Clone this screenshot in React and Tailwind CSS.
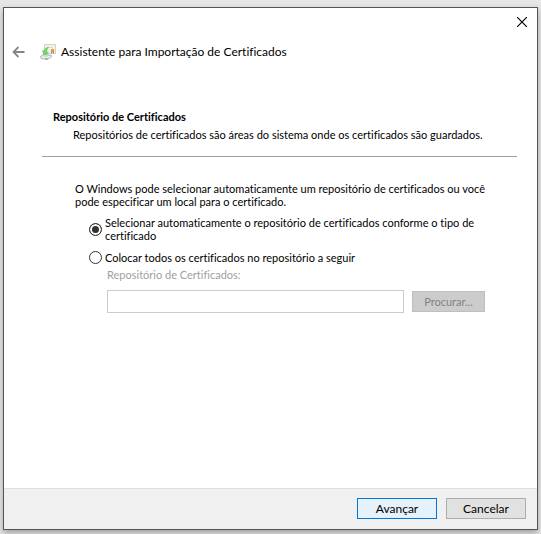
import { useState } from 'react'

function BackIcon() {
  return (
    <svg width="14" height="12" viewBox="0 0 14 12" fill="none" stroke="#868686" strokeWidth="1.8">
      <path d="M6.5 1 L1.5 6 L6.5 11 M1.5 6 H12.5" />
    </svg>
  )
}

function CloseIcon() {
  return (
    <svg width="10" height="10" viewBox="0 0 10 10" stroke="#000" strokeWidth="1.2">
      <path d="M0 0 L10 10 M10 0 L0 10" />
    </svg>
  )
}

function CertificateIcon() {
  return (
    <svg width="16" height="16" viewBox="0 0 16 16">
      {/* Paper */}
      <path d="M4.5 0.5 H15.5 V9.5 H4.5 Z" fill="#f5f2ec" stroke="#d6cfc2" />
      <path d="M7 3.5 H13" stroke="#e2dcd0" />
      {/* Seal and ribbon */}
      <path d="M11.8 7 L11.5 9.5 M13.2 7 L13.5 9.5" stroke="#5a8fc4" />
      <circle cx="12.5" cy="6.5" r="1.7" fill="#e39a1c" />
      {/* Drive */}
      <path d="M0.5 12.5 L4 10 L11.5 11.5 L11.5 13 L7 15.5 L1 14.3 Z" fill="#dcdedc" stroke="#9a9e9a" strokeWidth="0.7" />
      <path d="M1.5 13 L6.8 14 L11 12.3" stroke="#f6f6f6" fill="none" />
      <path d="M5.5 14.6 L7.5 15" stroke="#49b050" strokeWidth="1.1" />
      {/* Arrow */}
      <path d="M8.6 3.2 C6 3.6 4.6 5 4.3 7 L2.4 6.8 L4.2 11.2 L8.4 8.4 L6.6 7.8 C6.7 5.8 7.4 4.4 8.6 3.2 Z" fill="#6bdc66" stroke="#4cb850" strokeWidth="0.5" />
    </svg>
  )
}

const radioClass =
  "appearance-none flex-shrink-0 w-[13px] h-[13px] rounded-full border border-[#333] bg-white checked:bg-[#333] checked:shadow-[inset_0_0_0_2px_#fff]"

export default function App() {
  const [store, setStore] = useState('auto')
  const manual = store === 'manual'

  return (
    <div className="min-h-screen flex flex-col bg-[#e6e6e6] pt-[7px] px-[3px] pb-1 text-black text-[11px] leading-[13px] font-[Lato,sans-serif] [font-variant-ligatures:none]">
      <main className="flex-1 flex flex-col bg-white border border-[#555] shadow-[0_3px_6px_rgba(0,0,0,0.3)]">
        <div className="flex justify-end">
          <button type="button" aria-label="Fechar" className="w-[30px] h-7 flex items-center justify-center">
            <CloseIcon />
          </button>
        </div>

        <header className="flex items-center h-8 pl-2">
          <button type="button" aria-label="Voltar" className="w-7 flex">
            <BackIcon />
          </button>
          <CertificateIcon />
          <h1 className="pl-[5px] text-[12px] leading-4">
            Assistente para Importação de Certificados
          </h1>
        </header>

        <section className="mt-[42px] ml-[38px] mr-5 pl-[11px] pb-[15px] border-b border-[#a0a0a0]">
          <h2 className="font-bold">Repositório de Certificados</h2>
          <p className="pt-[5px] pl-5">
            Repositórios de certificados são áreas do sistema onde os certificados são guardados.
          </p>
        </section>

        <section className="flex-1 pt-[25px] pl-[71px] pr-5 pb-6">
          <p>
            O Windows pode selecionar automaticamente um repositório de certificados ou você
            <br />
            pode especificar um local para o certificado.
          </p>

          <div className="pt-2 pl-[14px]">
            <label className="flex items-center gap-[3px]">
              <input type="radio" name="store" className={radioClass} checked={!manual} onChange={() => setStore('auto')} />
              <span>
                Selecionar automaticamente o repositório de certificados conforme o tipo de
                <br />
                certificado
              </span>
            </label>
            <label className="flex items-center gap-[3px] pt-[9px]">
              <input type="radio" name="store" className={radioClass} checked={manual} onChange={() => setStore('manual')} />
              <span>Colocar todos os certificados no repositório a seguir</span>
            </label>
          </div>

          <div className="pt-1 pl-8 pr-8">
            <label htmlFor="store-name" className="block text-[#a0a0a0]">
              Repositório de Certificados:
            </label>
            <div className="flex items-center gap-2 pt-[9px]">
              <input
                id="store-name"
                type="text"
                disabled={!manual}
                className="flex-1 min-w-0 h-[23px] px-1 border border-[#ccc] bg-white"
              />
              <button
                type="button"
                disabled={!manual}
                className="w-[73px] h-[21px] border border-[#bfbfbf] bg-[#ccc] text-[#838383]"
              >
                Procurar...
              </button>
            </div>
          </div>
        </section>

        <footer className="flex justify-end gap-[9px] pt-[9px] pb-[10px] pr-[11px] border-t border-[#dfdfdf] bg-[#f0f0f0] text-[12px]">
          <button type="button" className="w-20 h-[21px] border border-[#0078d7] bg-[#e5f1fb]">
            Avançar
          </button>
          <button type="button" className="w-20 h-[21px] border border-[#adadad] bg-[#e1e1e1]">
            Cancelar
          </button>
        </footer>
      </main>
    </div>
  )
}
